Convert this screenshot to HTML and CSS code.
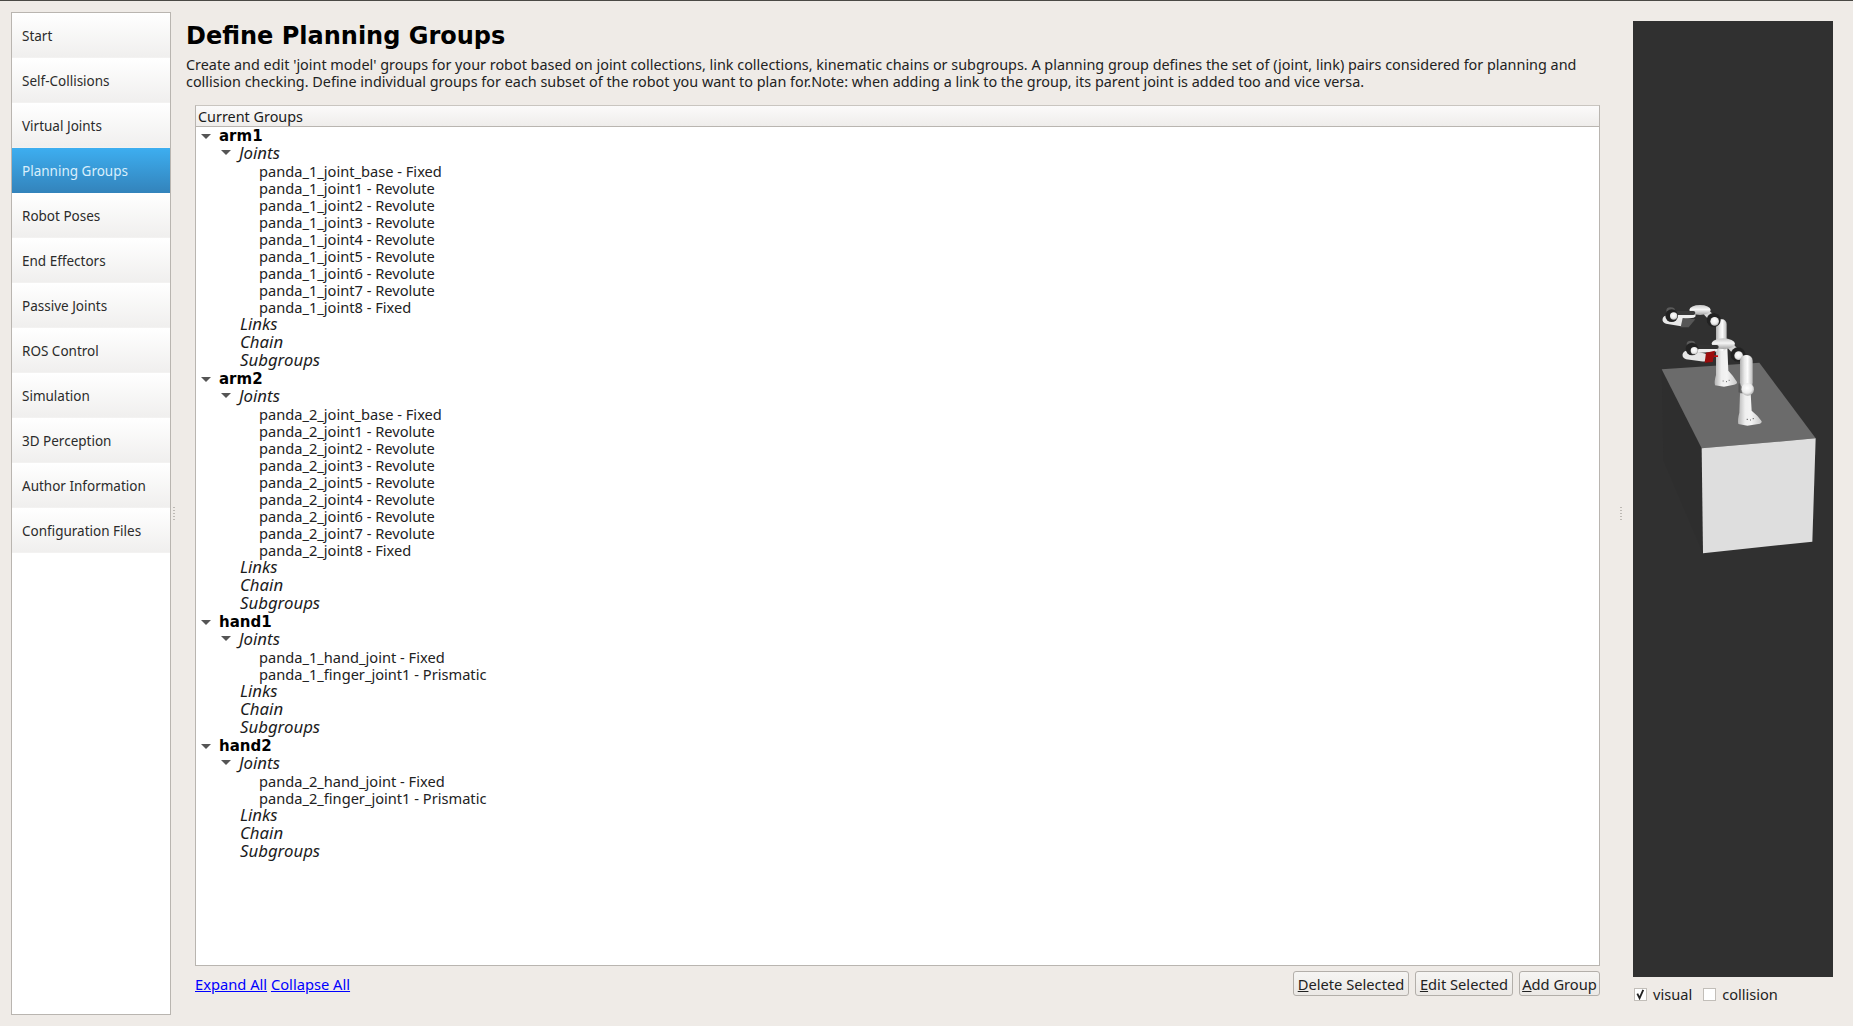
FILE: index.html
```html
<!DOCTYPE html>
<html lang="en">
<head>
<meta charset="utf-8">
<title>Define Planning Groups</title>
<link rel="stylesheet" href="styles.css">
</head>
<body>
<div class="window">
  <nav class="sidebar">
    <div class="nav-item">Start</div>
    <div class="nav-item">Self-Collisions</div>
    <div class="nav-item">Virtual Joints</div>
    <div class="nav-item active">Planning Groups</div>
    <div class="nav-item">Robot Poses</div>
    <div class="nav-item">End Effectors</div>
    <div class="nav-item">Passive Joints</div>
    <div class="nav-item">ROS Control</div>
    <div class="nav-item">Simulation</div>
    <div class="nav-item">3D Perception</div>
    <div class="nav-item">Author Information</div>
    <div class="nav-item">Configuration Files</div>
  </nav>
  <div class="splitter splitter-left"><span class="grip"></span></div>
  <main class="content">
    <h1 class="title">Define Planning Groups</h1>
    <p class="desc">Create and edit 'joint model' groups for your robot based on joint collections, link collections, kinematic chains or subgroups. A planning group defines the set of (joint, link) pairs considered for planning and collision checking. Define individual groups for each subset of the robot you want to plan for.Note: when adding a link to the group, its parent joint is added too and vice versa.</p>
    <section class="tree">
      <div class="tree-head">Current Groups</div>
      <div class="tree-body">
        <div class="row group"><i class="arrow"></i>arm1</div>
        <div class="row kind"><i class="arrow"></i>Joints</div>
        <div class="row leaf">panda_1_joint_base - Fixed</div>
        <div class="row leaf">panda_1_joint1 - Revolute</div>
        <div class="row leaf">panda_1_joint2 - Revolute</div>
        <div class="row leaf">panda_1_joint3 - Revolute</div>
        <div class="row leaf">panda_1_joint4 - Revolute</div>
        <div class="row leaf">panda_1_joint5 - Revolute</div>
        <div class="row leaf">panda_1_joint6 - Revolute</div>
        <div class="row leaf">panda_1_joint7 - Revolute</div>
        <div class="row leaf">panda_1_joint8 - Fixed</div>
        <div class="row kind plain">Links</div>
        <div class="row kind plain">Chain</div>
        <div class="row kind plain">Subgroups</div>
        <div class="row group"><i class="arrow"></i>arm2</div>
        <div class="row kind"><i class="arrow"></i>Joints</div>
        <div class="row leaf">panda_2_joint_base - Fixed</div>
        <div class="row leaf">panda_2_joint1 - Revolute</div>
        <div class="row leaf">panda_2_joint2 - Revolute</div>
        <div class="row leaf">panda_2_joint3 - Revolute</div>
        <div class="row leaf">panda_2_joint5 - Revolute</div>
        <div class="row leaf">panda_2_joint4 - Revolute</div>
        <div class="row leaf">panda_2_joint6 - Revolute</div>
        <div class="row leaf">panda_2_joint7 - Revolute</div>
        <div class="row leaf">panda_2_joint8 - Fixed</div>
        <div class="row kind plain">Links</div>
        <div class="row kind plain">Chain</div>
        <div class="row kind plain">Subgroups</div>
        <div class="row group"><i class="arrow"></i>hand1</div>
        <div class="row kind"><i class="arrow"></i>Joints</div>
        <div class="row leaf">panda_1_hand_joint - Fixed</div>
        <div class="row leaf">panda_1_finger_joint1 - Prismatic</div>
        <div class="row kind plain">Links</div>
        <div class="row kind plain">Chain</div>
        <div class="row kind plain">Subgroups</div>
        <div class="row group"><i class="arrow"></i>hand2</div>
        <div class="row kind"><i class="arrow"></i>Joints</div>
        <div class="row leaf">panda_2_hand_joint - Fixed</div>
        <div class="row leaf">panda_2_finger_joint1 - Prismatic</div>
        <div class="row kind plain">Links</div>
        <div class="row kind plain">Chain</div>
        <div class="row kind plain">Subgroups</div>
      </div>
    </section>
    <div class="actions">
      <div class="links"><a href="#">Expand All</a> <a href="#">Collapse All</a></div>
      <div class="buttons">
        <button class="btn btn-delete"><u>D</u>elete Selected</button>
        <button class="btn btn-edit"><u>E</u>dit Selected</button>
        <button class="btn btn-add"><u>A</u>dd Group</button>
      </div>
    </div>
  </main>
  <div class="splitter splitter-right"><span class="grip"></span></div>
  <aside class="viewer">
    <div class="viewport">
      <svg class="scene" viewBox="39 -777 600 2868" width="200" height="956" aria-hidden="true">
        <defs>
          <linearGradient id="limb" x1="0" y1="0" x2="1" y2="0">
            <stop offset="0" stop-color="#b0b0b0"/>
            <stop offset=".35" stop-color="#e8e8e8"/>
            <stop offset=".6" stop-color="#fcfcfc"/>
            <stop offset="1" stop-color="#bcbcbc"/>
          </linearGradient>
          <linearGradient id="foot" x1="0" y1="0" x2="1" y2="0">
            <stop offset="0" stop-color="#b4b4b4"/>
            <stop offset=".3" stop-color="#efefef"/>
            <stop offset=".55" stop-color="#f4f4f4"/>
            <stop offset="1" stop-color="#c8c8c8"/>
          </linearGradient>
          <linearGradient id="limbh" x1="0" y1="0" x2="0" y2="1">
            <stop offset="0" stop-color="#c8c8c8"/>
            <stop offset=".45" stop-color="#f6f6f6"/>
            <stop offset="1" stop-color="#a4a4a4"/>
          </linearGradient>
          <radialGradient id="ball" cx=".45" cy=".4" r=".65">
            <stop offset="0" stop-color="#ffffff"/>
            <stop offset=".6" stop-color="#ececec"/>
            <stop offset="1" stop-color="#a4a4a4"/>
          </radialGradient>
          <filter id="soft" x="-10%" y="-10%" width="120%" height="120%"><feGaussianBlur stdDeviation="1.8"/></filter>
        </defs>
        <polygon points="125,268 245,505 249,820 130,540" fill="#2e2e2e"/>
        <polygon points="125,268 418,248 587,475 245,505" fill="#6b6b6b"/>
        <polygon points="245,505 587,475 577,785 249,820" fill="#dedede"/>
        <g filter="url(#soft)">
          <path d="M285,316 Q282,305 288,285 L288,200 L322,200 L325,272 Q338,285 351,306 Q352,313 342,314 L312,320 Z" fill="url(#foot)"/>
          <rect x="288" y="118" width="32" height="95" rx="14" fill="url(#limb)"/>
          <path d="M262,100 L280,118" stroke="#d4d4d4" stroke-width="20" stroke-linecap="round"/>
          <ellipse cx="240" cy="90" rx="32" ry="15" fill="url(#limbh)"/>
          <circle cx="281" cy="120" r="21" fill="#232323"/>
          <circle cx="284" cy="124" r="13" fill="url(#ball)"/>
          <path d="M140,119 L190,127" stroke="#e8e8e8" stroke-width="25" stroke-linecap="round"/>
          <path d="M170,112 L220,106" stroke="#efefef" stroke-width="14" stroke-linecap="round"/>
          <path d="M172,99 L220,99" stroke="#3a3a3a" stroke-width="12" stroke-linecap="round"/>
          <ellipse cx="152" cy="92" rx="13" ry="10" fill="#5a5a5a"/>
          <circle cx="155" cy="107" r="19" fill="#232323"/>
          <circle cx="161" cy="108" r="11" fill="url(#ball)"/>
          <polygon points="188,114 226,118 206,142 182,142" fill="#565656"/>
          <path d="M333,200 L352,220" stroke="#d4d4d4" stroke-width="20" stroke-linecap="round"/>
          <ellipse cx="310" cy="191" rx="35" ry="16" fill="url(#limbh)"/>
          <path d="M200,225 L250,232" stroke="#e6e6e6" stroke-width="25" stroke-linecap="round"/>
          <path d="M230,212 L285,208" stroke="#eeeeee" stroke-width="14" stroke-linecap="round"/>
          <path d="M232,201 L290,201" stroke="#333" stroke-width="12" stroke-linecap="round"/>
          <ellipse cx="213" cy="192" rx="13" ry="10" fill="#5a5a5a"/>
          <circle cx="216" cy="207" r="19" fill="#232323"/>
          <circle cx="223" cy="212" r="11" fill="url(#ball)"/>
          <polygon points="258,218 285,212 278,246 254,248" fill="#9c0c0c"/>
          <rect x="282" y="226" width="12" height="5" fill="#c01010"/>
          <circle cx="354" cy="224" r="22" fill="#232323"/>
          <circle cx="356" cy="227" r="13" fill="url(#ball)"/>
          <path d="M355,432 Q352,420 358,398 L360,340 L392,340 L395,392 Q412,405 425,424 Q426,431 415,432 L382,437 Z" fill="url(#foot)"/>
          <rect x="360" y="225" width="38" height="100" rx="17" fill="url(#limb)"/>
          <circle cx="383" cy="328" r="19" fill="url(#ball)"/>
          <path d="M358,312 L358,335" stroke="#555" stroke-width="5" stroke-linecap="round"/>
          <path d="M380,418 h4 M390,420 h3 M398,416 h4 M308,303 h3 M318,305 h3 M326,301 h3" stroke="#666" stroke-width="3"/>
        </g>
      </svg>
    </div>
    <div class="view-options">
      <label class="check"><span class="box on"><svg viewBox="0 0 12 12" width="12" height="12" aria-hidden="true"><path d="M2.5 5.5 L5 10.5 L9 1.5" fill="none" stroke="#222" stroke-width="2"/></svg></span>visual</label>
      <label class="check"><span class="box"></span>collision</label>
    </div>
  </aside>
</div>
</body>
</html>
```
FILE: styles.css
```css
* { box-sizing: border-box; }
html, body { margin: 0; height: 100%; }
body {
  background: #efebe7;
  color: #1a1a1a;
  font-family: "Noto Sans", sans-serif;
  font-size: 14.4px;
  overflow: hidden;
}
.window {
  display: flex;
  height: 1026px;
  border-top: 1px solid #4a4945;
  padding: 11px 0 11px 11px;
}
.sidebar {
  width: 160px;
  flex: none;
  height: 1003px;
  background: #fff;
  border: 1px solid #b9b5b0;
}
.nav-item {
  height: 45px;
  padding: 1px 0 0 10px;
  display: flex;
  align-items: center;
  font-size: 13.5px;
  color: #2b2b2b;
  background: linear-gradient(#ffffff, #f0efee);
  border-bottom: 1px solid #f3f2f1;
}
.nav-item.active {
  color: #d9effc;
  background: linear-gradient(#3daef0, #3383bb);
  border-bottom: 0;
}
.splitter {
  flex: none;
  display: flex;
  align-items: center;
}
.splitter-left { width: 15px; padding-left: 2px; }
.splitter-right { width: 33px; padding-left: 20px; }
.grip {
  width: 2px;
  height: 16px;
  background: radial-gradient(circle, #bdb9b4 .7px, transparent 1px) 0 0 / 2px 3px;
}
.content {
  width: 1414px;
  flex: none;
  display: flex;
  flex-direction: column;
}
.title {
  margin: 8px 0 0;
  font-family: "DejaVu Sans", sans-serif;
  font-weight: 700;
  font-size: 24px;
  line-height: 32px;
  color: #000;
}
.desc {
  margin: 4px 0 0;
  font-size: 14.4px;
  line-height: 17px;
  color: #222;
}
.tree {
  margin: 15px 0 0 9px;
  height: 861px;
  flex: none;
  display: flex;
  flex-direction: column;
  background: #fff;
  border: 1px solid #b9b5b0;
  border-top-color: #c9c5c0;
}
.tree-head {
  height: 21px;
  padding: 1px 0 0 2px;
  display: flex;
  align-items: center;
  font-size: 14.4px;
  line-height: 18px;
  background: linear-gradient(#fbfafa, #efedeb);
  border-bottom: 1px solid #b9b5b0;
}
.tree-body { flex: 1; }
.row {
  display: flex;
  align-items: center;
  white-space: nowrap;
}
.group {
  height: 18px;
  padding: 1px 0 0 5px;
  font-family: "DejaVu Sans", sans-serif;
  font-weight: 700;
  font-size: 15px;
  line-height: 17px;
  color: #000;
}
.kind {
  height: 18px;
  padding: 0 0 3px 25px;
  font-style: italic;
  font-size: 16.8px;
  line-height: 15px;
  color: #1c1c1c;
}
.kind.plain { padding-left: 44px; }
.leaf {
  height: 17px;
  padding-left: 63px;
  font-size: 14.64px;
  line-height: 17px;
  color: #222;
}
.arrow {
  flex: none;
  width: 0;
  height: 0;
  margin-right: 8px;
  border-left: 5px solid transparent;
  border-right: 5px solid transparent;
  border-top: 5px solid #555;
}
.actions {
  margin: 5px 0 0 9px;
  height: 25px;
  display: flex;
  align-items: center;
  justify-content: space-between;
}
.links { font-size: 14.7px; }
.links a { color: #0000ff; }
.buttons { display: flex; gap: 6px; }
.btn {
  height: 25px;
  padding: 0;
  font-family: inherit;
  font-size: 14.7px;
  color: #222;
  background: linear-gradient(#f6f5f3, #ebe8e5);
  border: 1px solid #b3afaa;
  border-radius: 3px;
}
.btn-delete { width: 116px; }
.btn-edit { width: 98px; }
.btn-add { width: 81px; }
.viewer {
  width: 200px;
  flex: none;
  padding-top: 9px;
  display: flex;
  flex-direction: column;
}
.viewport {
  width: 200px;
  height: 956px;
  flex: none;
  background: #303030;
}
.scene { display: block; }
.view-options {
  margin-top: 7px;
  display: flex;
  gap: 11px;
  padding-left: 1px;
}
.check {
  display: flex;
  align-items: center;
  gap: 6px;
  font-size: 14.6px;
  color: #222;
}
.box {
  width: 13px;
  height: 13px;
  display: flex;
  align-items: center;
  justify-content: center;
  background: #fff;
  border: 1px solid #c2beb9;
}
```
